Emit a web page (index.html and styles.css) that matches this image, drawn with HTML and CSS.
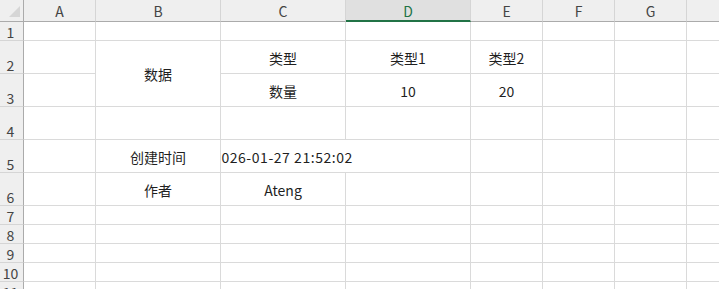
FILE: index.html
```html
<!DOCTYPE html>
<html>
<head>
<meta charset="utf-8">
<link rel="stylesheet" href="styles.css">
</head>
<body>
<div class="sheet">
  <div class="corner"><svg width="24" height="22" viewBox="0 0 24 22"><polygon points="9,17 20,17 20,6" fill="#d6d6d6"/></svg></div>
  <div class="colh">A</div>
  <div class="colh">B</div>
  <div class="colh">C</div>
  <div class="colh sel">D</div>
  <div class="colh">E</div>
  <div class="colh">F</div>
  <div class="colh">G</div>
  <div class="colh last"></div>

  <div class="rowh">1</div>
  <div class="c"></div><div class="c"></div><div class="c"></div><div class="c"></div><div class="c"></div><div class="c"></div><div class="c"></div><div class="c last"></div>

  <div class="rowh">2</div>
  <div class="c"></div>
  <div class="c merged"><span>数据</span></div>
  <div class="c"><span>类型</span></div>
  <div class="c"><span>类型1</span></div>
  <div class="c"><span>类型2</span></div>
  <div class="c"></div><div class="c"></div><div class="c last"></div>

  <div class="rowh">3</div>
  <div class="c"></div>
  <div class="c"><span>数量</span></div>
  <div class="c"><span>10</span></div>
  <div class="c"><span>20</span></div>
  <div class="c"></div><div class="c"></div><div class="c last"></div>

  <div class="rowh">4</div>
  <div class="c"></div><div class="c"></div><div class="c"></div><div class="c"></div><div class="c"></div><div class="c"></div><div class="c"></div><div class="c last"></div>

  <div class="rowh">5</div>
  <div class="c"></div>
  <div class="c"><span>创建时间</span></div>
  <div class="c spill"><div class="spill-in"><span class="stamp">2026-01-27 21:52:02</span></div></div>
  <div class="c"></div><div class="c"></div><div class="c"></div><div class="c last"></div>

  <div class="rowh">6</div>
  <div class="c"></div>
  <div class="c"><span>作者</span></div>
  <div class="c"><span>Ateng</span></div>
  <div class="c"></div><div class="c"></div><div class="c"></div><div class="c"></div><div class="c last"></div>

  <div class="rowh">7</div>
  <div class="c"></div><div class="c"></div><div class="c"></div><div class="c"></div><div class="c"></div><div class="c"></div><div class="c"></div><div class="c last"></div>
  <div class="rowh">8</div>
  <div class="c"></div><div class="c"></div><div class="c"></div><div class="c"></div><div class="c"></div><div class="c"></div><div class="c"></div><div class="c last"></div>
  <div class="rowh">9</div>
  <div class="c"></div><div class="c"></div><div class="c"></div><div class="c"></div><div class="c"></div><div class="c"></div><div class="c"></div><div class="c last"></div>
  <div class="rowh">10</div>
  <div class="c"></div><div class="c"></div><div class="c"></div><div class="c"></div><div class="c"></div><div class="c"></div><div class="c"></div><div class="c last"></div>
  <div class="rowh">11</div>
  <div class="c"></div><div class="c"></div><div class="c"></div><div class="c"></div><div class="c"></div><div class="c"></div><div class="c"></div><div class="c last"></div>
</div>
</body>
</html>
```

FILE: styles.css
```css
html, body {
  margin: 0;
  padding: 0;
  background: #ffffff;
  overflow: hidden;
}
.sheet {
  display: grid;
  grid-template-columns: 24px 72px 125px 125px 125px 72px 72px 72px 40px;
  grid-template-rows: 22px 19px 33px 33px 33px 33px 33px 19px 19px 19px 19px 19px;
  width: 719px;
  font-family: "Noto Sans CJK SC", "Noto Sans", sans-serif;
  font-size: 14px;
  color: #1f1f1f;
}
.sheet > div {
  box-sizing: border-box;
}
.corner {
  background: #efefef;
  border-right: 1px solid #ababab;
  border-bottom: 1px solid #ababab;
}
.corner svg { display: block; }
.colh {
  background: #efefef;
  border-right: 1px solid #d5d5d5;
  border-bottom: 1px solid #ababab;
  display: flex;
  align-items: center;
  justify-content: center;
  color: #444;
  font-size: 14px;
  line-height: 1;
  padding-top: 1px;
}
.colh.sel {
  background: #e0e0e0;
  color: #217346;
  border-bottom: 2px solid #217346;
  padding-top: 2px;
}
.colh.last { border-right: none; }
.rowh {
  background: #efefef;
  border-right: 1px solid #ababab;
  border-bottom: 1px solid #d5d5d5;
  display: flex;
  align-items: flex-end;
  justify-content: center;
  color: #444;
  font-size: 14px;
  line-height: 16px;
  padding-bottom: 0;
  padding-right: 2px;
}
.c {
  border-right: 1px solid #dadada;
  border-bottom: 1px solid #dadada;
  display: flex;
  align-items: center;
  justify-content: center;
  padding-top: 1px;
  line-height: 18px;
  white-space: nowrap;
  overflow: hidden;
}
.c.last { border-right: none; }
.merged {
  grid-row: span 2;
  padding-top: 0;
}
.spill {
  grid-column: span 2;
  justify-content: flex-start;
}
.spill-in {
  width: 124px;
  flex: none;
  display: flex;
  justify-content: center;
}
.spill-in span { flex: none; }
.stamp { letter-spacing: 0.55px; }
```
